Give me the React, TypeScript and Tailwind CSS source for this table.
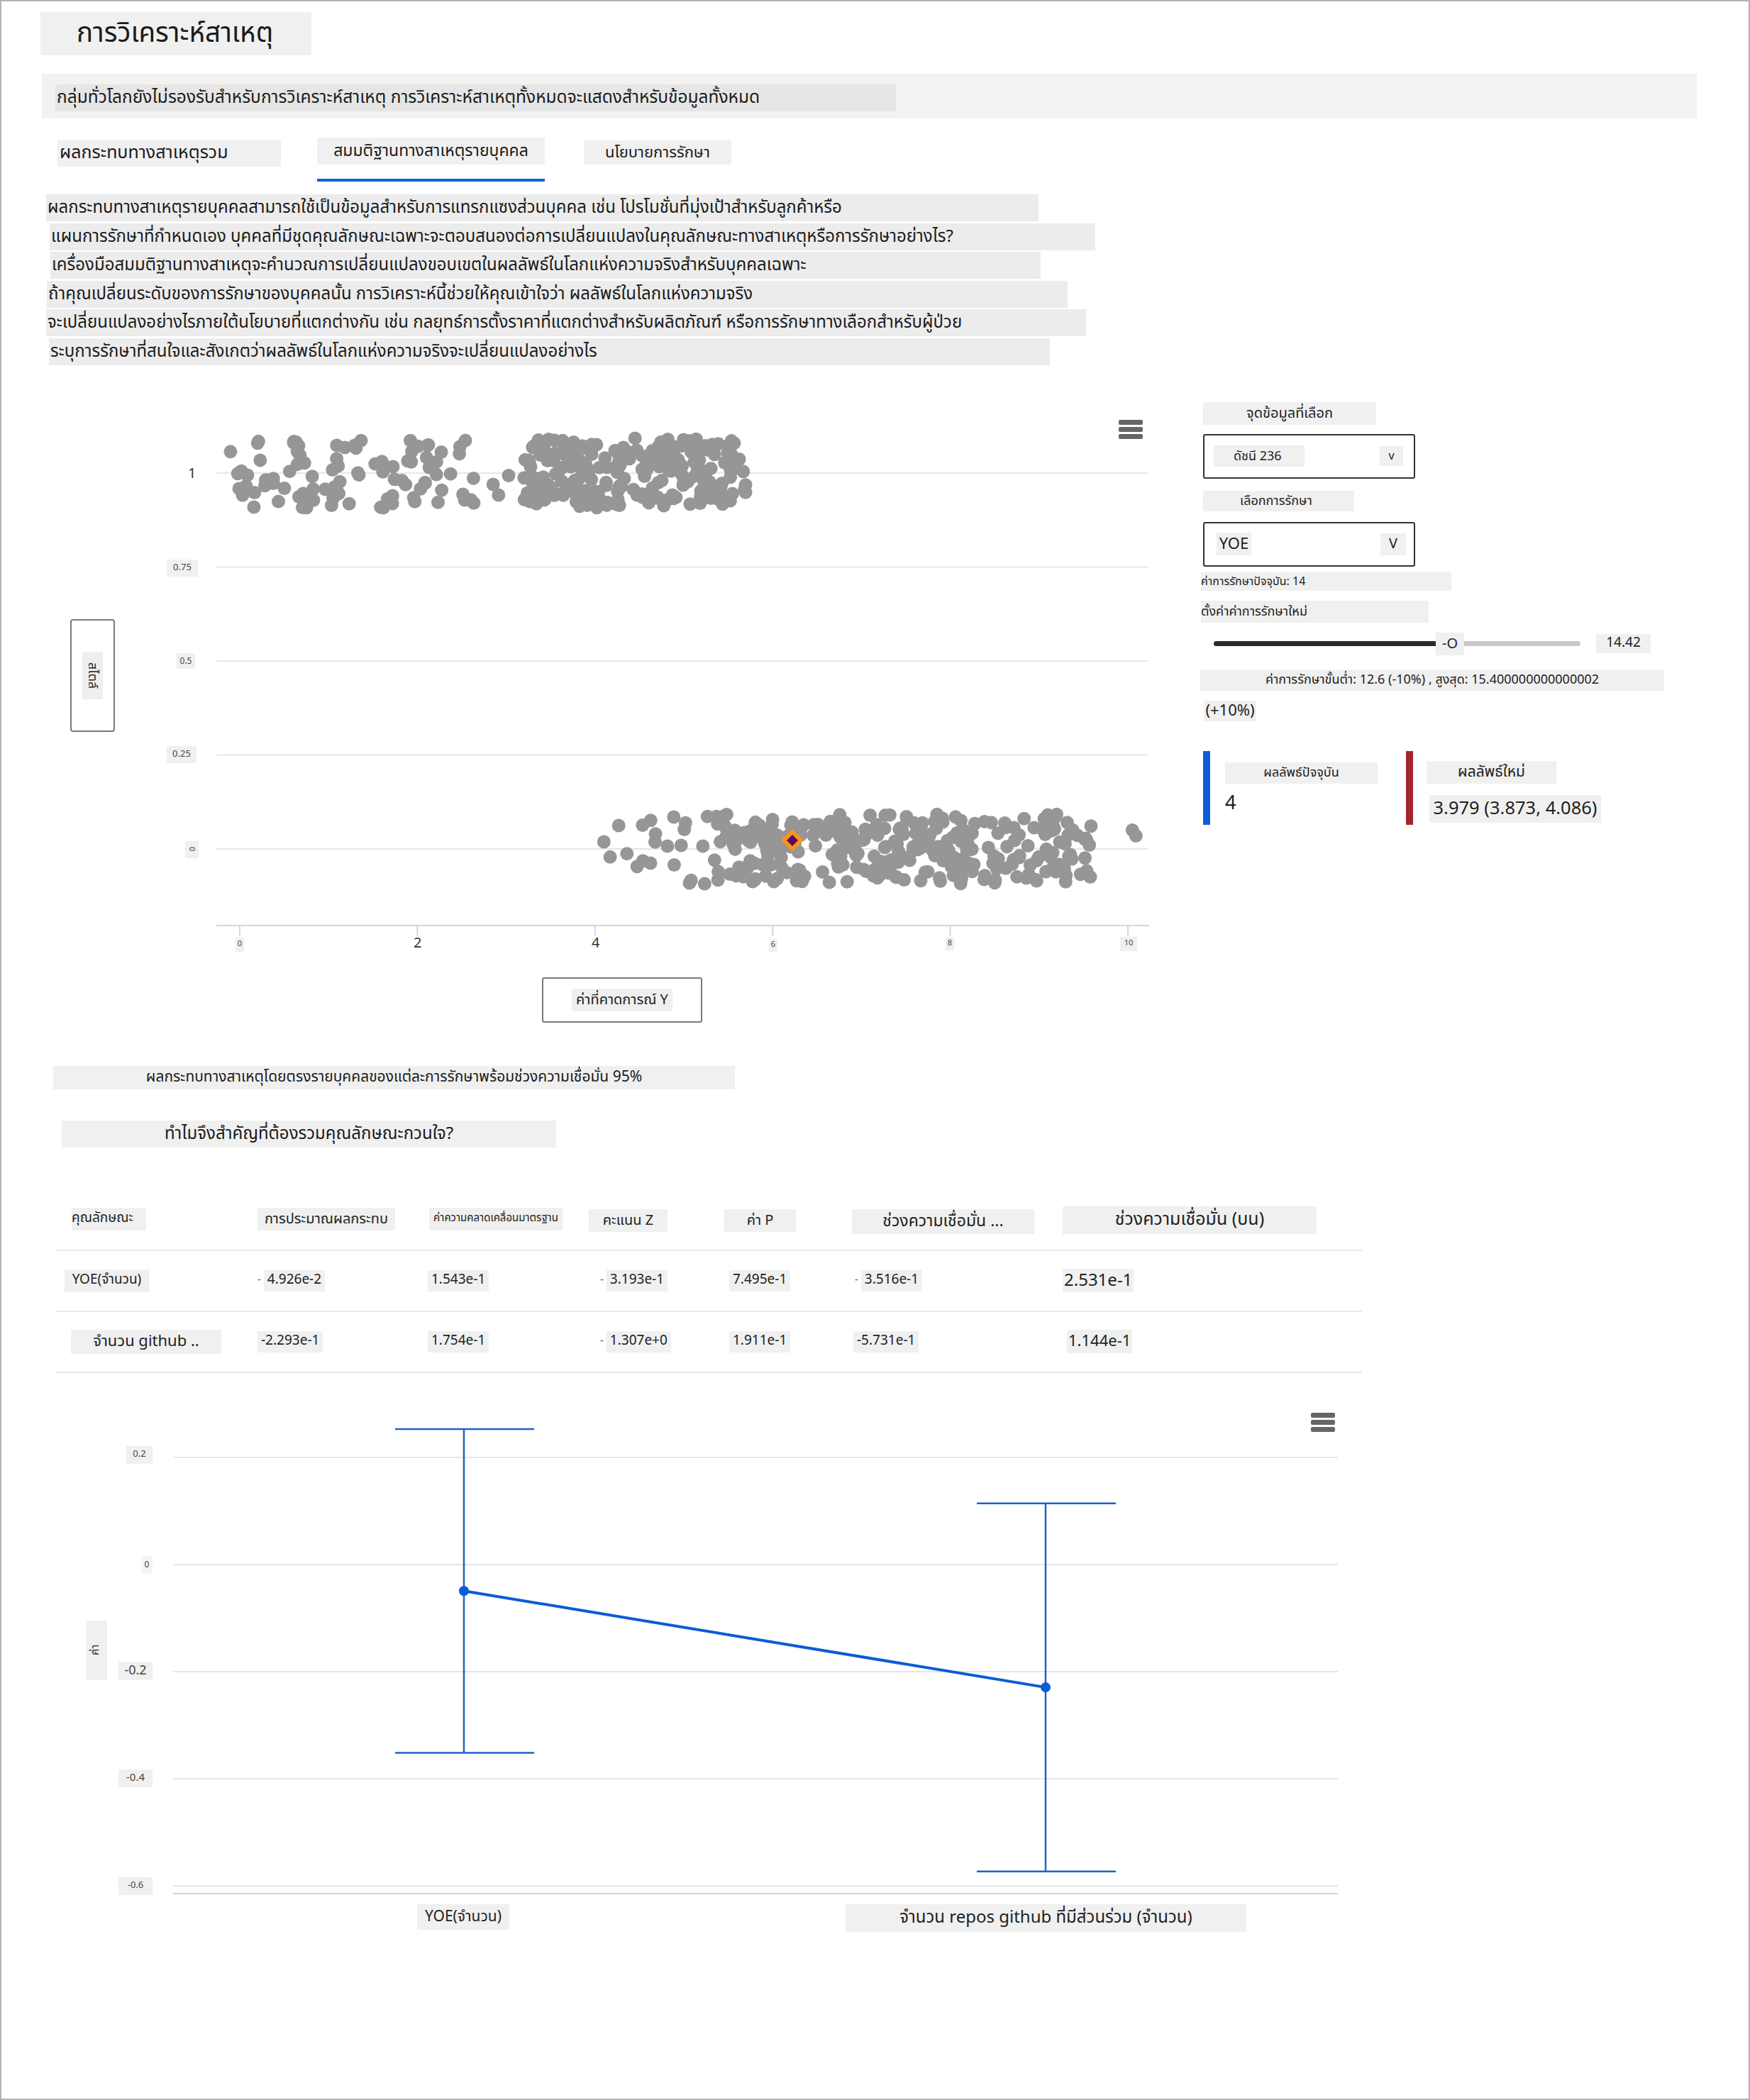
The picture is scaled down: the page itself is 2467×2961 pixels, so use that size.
import React from 'react'

function mulberry32(a: number) {
  return function () {
    a |= 0
    a = (a + 0x6d2b79f5) | 0
    let t = Math.imul(a ^ (a >>> 15), 1 | a)
    t = (t + Math.imul(t ^ (t >>> 7), 61 | t)) ^ t
    return ((t ^ (t >>> 14)) >>> 0) / 4294967296
  }
}

type Pt = [number, number]
const rnd = mulberry32(236)
const cluster = (n: number, x0: number, x1: number, yc: number): Pt[] =>
  Array.from({ length: n }, () => [x0 + rnd() * (x1 - x0), yc + (rnd() * 2 - 1) * 0.093] as Pt)

const points: Pt[] = [
  ...cluster(95, -0.15, 2.7, 1),
  ...cluster(3, 2.7, 3.15, 1),
  ...cluster(225, 3.2, 5.72, 1),
  ...cluster(22, 4.1, 5.3, 0),
  ...cluster(300, 5.3, 9.6, 0),
  [10.05, 0.05],
  [10.09, 0.035],
]
const sx = (v: number) => 278 + v * 125.2
const sy = (v: number) => 638 - v * 530

const paragraph = [
  { ml: 'ml-[63px]', w: 'w-[1399px]', text: 'ผลกระทบทางสาเหตุรายบุคคลสามารถใช้เป็นข้อมูลสำหรับการแทรกแซงส่วนบุคคล เช่น โปรโมชั่นที่มุ่งเป้าสำหรับลูกค้าหรือ' },
  { ml: 'ml-[68px]', w: 'w-[1474px]', text: 'แผนการรักษาที่กำหนดเอง บุคคลที่มีชุดคุณลักษณะเฉพาะจะตอบสนองต่อการเปลี่ยนแปลงในคุณลักษณะทางสาเหตุหรือการรักษาอย่างไร?' },
  { ml: 'ml-[69px]', w: 'w-[1396px]', text: 'เครื่องมือสมมติฐานทางสาเหตุจะคำนวณการเปลี่ยนแปลงขอบเขตในผลลัพธ์ในโลกแห่งความจริงสำหรับบุคคลเฉพาะ' },
  { ml: 'ml-[64px]', w: 'w-[1439px]', text: 'ถ้าคุณเปลี่ยนระดับของการรักษาของบุคคลนั้น การวิเคราะห์นี้ช่วยให้คุณเข้าใจว่า ผลลัพธ์ในโลกแห่งความจริง' },
  { ml: 'ml-[63px]', w: 'w-[1466px]', text: 'จะเปลี่ยนแปลงอย่างไรภายใต้นโยบายที่แตกต่างกัน เช่น กลยุทธ์การตั้งราคาที่แตกต่างสำหรับผลิตภัณฑ์ หรือการรักษาทางเลือกสำหรับผู้ป่วย' },
  { ml: 'ml-[67px]', w: 'w-[1411px]', text: 'ระบุการรักษาที่สนใจและสังเกตว่าผลลัพธ์ในโลกแห่งความจริงจะเปลี่ยนแปลงอย่างไร' },
]

function Hamburger({ className }: { className: string }) {
  return (
    <div className={`absolute flex flex-col gap-[3px] ${className}`}>
      <span className="h-[7px] w-full rounded-[2px] bg-[#666]" />
      <span className="h-[7px] w-full rounded-[2px] bg-[#666]" />
      <span className="h-[7px] w-full rounded-[2px] bg-[#666]" />
    </div>
  )
}

function ScatterChart() {
  return (
    <div className="relative h-[900px] w-[1600px] shrink-0">
      <svg className="absolute inset-0" width={1600} height={900}>
        {[1, 0.75, 0.5, 0.25, 0].map((v) => (
          <line key={v} x1={245} x2={1558} y1={sy(v)} y2={sy(v)} stroke="#e6e6e6" strokeWidth={2} />
        ))}
        <line x1={245} x2={1560} y1={746} y2={746} stroke="#ccd6eb" strokeWidth={2} />
        {[0, 2, 4, 6, 8, 10].map((v) => (
          <line key={v} x1={sx(v)} x2={sx(v)} y1={746} y2={760} stroke="#ccd6eb" strokeWidth={2} />
        ))}
        {points.map(([x, y], i) => (
          <circle key={i} cx={sx(x)} cy={sy(y)} r={9.5} fill="#969696" />
        ))}
        <polygon points="1057,610 1073,626 1057,642 1041,626" fill="#f7931e" />
        <polygon points="1057,618 1065,626 1057,634 1049,626" fill="#5a0b5c" />
      </svg>
      <Hamburger className="left-[1517px] top-[33px] w-[34px]" />

      {/* y ticks */}
      <span className="absolute left-[205px] top-[94px] text-[20px] text-[#333]">1</span>
      <span className="absolute left-[175px] top-[230px] flex h-[24px] w-[44px] items-center justify-center bg-[#f0f0f0] text-[13px] text-[#444]">0.75</span>
      <span className="absolute left-[189px] top-[362px] flex h-[22px] w-[26px] items-center justify-center bg-[#f0f0f0] text-[12px] text-[#444]">0.5</span>
      <span className="absolute left-[175px] top-[493px] flex h-[24px] w-[42px] items-center justify-center bg-[#f0f0f0] text-[13px] text-[#444]">0.25</span>
      <span className="absolute left-[201px] top-[627px] flex h-[24px] w-[19px] items-center justify-center bg-[#f0f0f0] text-[11px] text-[#444]">
        <span className="rotate-90">0</span>
      </span>

      {/* x ticks */}
      <span className="absolute left-[272px] top-[763px] flex h-[20px] w-[12px] items-center justify-center bg-[#f0f0f0] text-[11px] text-[#444]">0</span>
      <span className="absolute left-[523px] top-[756px] text-[20px] text-[#333]">2</span>
      <span className="absolute left-[774px] top-[756px] text-[20px] text-[#333]">4</span>
      <span className="absolute left-[1024px] top-[765px] flex h-[18px] w-[12px] items-center justify-center bg-[#f0f0f0] text-[11px] text-[#444]">6</span>
      <span className="absolute left-[1273px] top-[763px] flex h-[18px] w-[12px] items-center justify-center bg-[#f0f0f0] text-[11px] text-[#444]">8</span>
      <span className="absolute left-[1519px] top-[762px] flex h-[20px] w-[24px] items-center justify-center bg-[#f0f0f0] text-[11px] text-[#444]">10</span>

      {/* axis titles */}
      <div className="absolute left-[39px] top-[314px] flex h-[159px] w-[63px] items-center justify-center rounded-[4px] border-2 border-[#7a7a7a]">
        <div className="flex h-[67px] w-[29px] items-center justify-center bg-[#efefef]">
          <span className="rotate-90 text-[18px] text-[#222]">สไตล์</span>
        </div>
      </div>
      <div className="absolute left-[704px] top-[819px] flex h-[64px] w-[226px] items-center justify-center rounded-[3px] border-2 border-[#7a7a7a]">
        <div className="flex h-[32px] items-center bg-[#efefef] px-[6px] text-[20px] text-[#222]">ค่าที่คาดการณ์ Y</div>
      </div>
    </div>
  )
}

function WhatIfPanel() {
  return (
    <div className="ml-[32px] mt-[8px] flex w-[660px] flex-col text-[#222]">
      <div className="ml-[4px] flex h-[32px] w-[244px] items-center justify-center bg-[#f0f0f0] text-[20px]">จุดข้อมูลที่เลือก</div>

      <div className="ml-[4px] mt-[13px] flex h-[63px] w-[299px] items-center justify-between rounded-[3px] border-2 border-[#333] pl-[13px] pr-[15px]">
        <span className="flex h-[30px] w-[128px] items-center bg-[#f0f0f0] pl-[28px] text-[18px]">ดัชนี 236</span>
        <span className="flex h-[28px] w-[33px] items-center justify-center bg-[#f0f0f0] text-[16px]">v</span>
      </div>

      <div className="ml-[4px] mt-[17px] flex h-[29px] w-[213px] items-center bg-[#f0f0f0] pl-[52px] text-[18px]">เลือกการรักษา</div>

      <div className="ml-[4px] mt-[15px] flex h-[63px] w-[299px] items-center justify-between rounded-[3px] border-2 border-[#333] pl-[17px] pr-[11px]">
        <span className="flex h-[32px] w-[49px] items-center justify-center bg-[#f0f0f0] text-[22px]">YOE</span>
        <span className="flex h-[31px] w-[36px] items-center justify-center bg-[#f0f0f0] text-[20px]">V</span>
      </div>

      <div className="ml-[1px] mt-[8px] flex h-[26px] w-[353px] items-center bg-[#f0f0f0] text-[16px]">ค่าการรักษาปัจจุบัน: 14</div>
      <div className="ml-[1px] mt-[14px] flex h-[31px] w-[321px] items-center bg-[#f0f0f0] text-[18px]">ตั้งค่าค่าการรักษาใหม่</div>

      <div className="mt-[14px] flex h-[32px] items-center">
        <div className="ml-[19px] flex h-[7px] w-[517px] items-center rounded-full bg-[#c8c8c8]">
          <div className="h-[7px] w-[313px] rounded-l-full bg-[#2b2b2b]" />
          <div className="flex h-[32px] w-[40px] items-center justify-center bg-[#f0f0f0] text-[20px]">-O</div>
        </div>
        <div className="ml-[22px] flex h-[27px] w-[77px] items-center justify-center bg-[#f0f0f0] text-[19px]">14.42</div>
      </div>

      <div className="mt-[20px] flex h-[30px] w-[654px] items-center justify-center bg-[#f0f0f0] text-[18px]">
        ค่าการรักษาขั้นต่ำ: 12.6 (-10%) , สูงสุด: 15.400000000000002
      </div>
      <div className="ml-[5px] mt-[14px] flex h-[29px] w-[74px] items-center justify-center bg-[#f0f0f0] text-[22px]">(+10%)</div>

      <div className="ml-[4px] mt-[42px] flex">
        <div className="flex w-[286px]">
          <div className="h-[104px] w-[10px] bg-[#0c5fd8]" />
          <div className="ml-[21px] flex flex-col">
            <div className="mt-[16px] flex h-[30px] w-[215px] items-center justify-center bg-[#f0f0f0] text-[18px]">ผลลัพธ์ปัจจุบัน</div>
            <div className="mt-[14px] text-[27px] leading-none">4</div>
          </div>
        </div>
        <div className="flex">
          <div className="h-[104px] w-[10px] bg-[#a4262c]" />
          <div className="ml-[19px] flex flex-col">
            <div className="mt-[14px] flex h-[32px] w-[183px] items-center justify-center bg-[#f0f0f0] text-[21px]">ผลลัพธ์ใหม่</div>
            <div className="ml-[4px] mt-[16px] flex h-[39px] w-[242px] items-center justify-center bg-[#f0f0f0] text-[25.5px]">3.979 (3.873, 4.086)</div>
          </div>
        </div>
      </div>
    </div>
  )
}

const cols = 'grid grid-cols-[267px_237px_230px_189px_182px_297px_424px]'

function Val({ children, dash, className = '' }: { children: React.ReactNode; dash?: boolean; className?: string }) {
  return (
    <div className={`flex items-center ${className}`}>
      {dash && <span className="mr-[4px] text-[15px] text-[#555]">-</span>}
      <span className="flex h-[30px] items-center bg-[#f0f0f0] px-[5px] text-[19px] text-[#222]">{children}</span>
    </div>
  )
}

function EffectsTable() {
  return (
    <div className="ml-[76px] mt-[83px] w-[1842px] text-[#222]">
      <div className={`${cols} h-[61px] items-start pl-[18px]`}>
        <div className="ml-[5px] mt-[2px] flex h-[32px] w-[105px] items-center bg-[#f0f0f0] text-[19px]">คุณลักษณะ</div>
        <div className="mt-[2px] flex h-[32px] w-[194px] items-center justify-center bg-[#f0f0f0] text-[20px]">การประมาณผลกระทบ</div>
        <div className="ml-[5px] mt-[2px] flex h-[32px] w-[188px] items-center justify-center bg-[#f0f0f0] text-[15px]">ค่าความคลาดเคลื่อนมาตรฐาน</div>
        <div className="mt-[4px] flex h-[32px] w-[111px] items-center justify-center bg-[#f0f0f0] text-[20px]">คะแนน Z</div>
        <div className="ml-[2px] mt-[4px] flex h-[32px] w-[101px] items-center justify-center bg-[#f0f0f0] text-[20px]">ค่า P</div>
        <div className="mt-[4px] flex h-[35px] w-[257px] items-center justify-center bg-[#f0f0f0] text-[23px]">ช่วงความเชื่อมั่น ...</div>
        <div className="flex h-[39px] w-[358px] items-center justify-center bg-[#f0f0f0] text-[25px]">ช่วงความเชื่อมั่น (บน)</div>
      </div>
      <div className="h-[2px] bg-[#e8e8e8]" />
      <div className={`${cols} h-[84px] items-center pl-[18px]`}>
        <span className="-ml-[5px] flex h-[32px] w-[119px] items-center justify-center bg-[#f0f0f0] text-[19px]">YOE(จำนวน)</span>
        <Val dash>4.926e-2</Val>
        <Val className="ml-[3px]">1.543e-1</Val>
        <Val dash className="ml-[16px]">3.193e-1</Val>
        <Val className="ml-[9px]">7.495e-1</Val>
        <Val dash className="ml-[4px]">3.516e-1</Val>
        <div className="flex">
          <span className="flex h-[33px] items-center bg-[#f0f0f0] px-[2px] text-[24px]">2.531e-1</span>
        </div>
      </div>
      <div className="h-[2px] bg-[#e8e8e8]" />
      <div className={`${cols} h-[84px] items-center pl-[18px]`}>
        <div className="ml-[4px] flex h-[34px] w-[212px] items-center justify-center bg-[#f0f0f0] text-[22px]">จำนวน github ..</div>
        <Val>-2.293e-1</Val>
        <Val className="ml-[3px]">1.754e-1</Val>
        <Val dash className="ml-[16px]">1.307e+0</Val>
        <Val className="ml-[9px]">1.911e-1</Val>
        <Val className="ml-[2px]">-5.731e-1</Val>
        <div className="flex">
          <span className="ml-[6px] flex h-[33px] items-center bg-[#f0f0f0] px-[2px] text-[22px]">1.144e-1</span>
        </div>
      </div>
      <div className="h-[2px] bg-[#e8e8e8]" />
    </div>
  )
}

const ey = (v: number) => 249 - v * 755

function ErrorBarChart() {
  const bars = [
    { x: 594, v: -0.04926, lo: -0.3516, hi: 0.2531 },
    { x: 1414, v: -0.2293, lo: -0.5731, hi: 0.1144 },
  ]
  return (
    <div className="relative ml-[58px] mt-[21px] h-[800px] w-[1900px]">
      <svg className="absolute inset-0" width={1900} height={800}>
        {[0.2, 0, -0.2, -0.4, -0.6].map((v) => (
          <line key={v} x1={184} x2={1826} y1={ey(v)} y2={ey(v)} stroke="#e6e6e6" strokeWidth={2} />
        ))}
        <line x1={184} x2={1826} y1={713} y2={713} stroke="#ccd6eb" strokeWidth={2} />
        {bars.map((b) => (
          <g key={b.x} stroke="#1f63c6" strokeWidth={2.5}>
            <line x1={b.x} x2={b.x} y1={ey(b.hi)} y2={ey(b.lo)} />
            <line x1={b.x - 97} x2={b.x + 99} y1={ey(b.hi)} y2={ey(b.hi)} />
            <line x1={b.x - 97} x2={b.x + 99} y1={ey(b.lo)} y2={ey(b.lo)} />
          </g>
        ))}
        <line x1={594} y1={ey(-0.04926)} x2={1414} y2={ey(-0.2293)} stroke="#0b5cd6" strokeWidth={4} />
        {bars.map((b) => (
          <circle key={b.x} cx={b.x} cy={ey(b.v)} r={7} fill="#0b5cd6" />
        ))}
      </svg>
      <Hamburger className="left-[1788px] top-[35px] w-[34px]" />

      <span className="absolute left-[118px] top-[82px] flex h-[25px] w-[37px] items-center justify-center bg-[#f0f0f0] text-[13px] text-[#444]">0.2</span>
      <span className="absolute left-[139px] top-[237px] flex h-[25px] w-[16px] items-center justify-center bg-[#f5f5f5] text-[12px] text-[#444]">0</span>
      <span className="absolute left-[107px] top-[386px] flex h-[26px] w-[48px] items-center justify-center bg-[#f0f0f0] text-[18px] text-[#444]">-0.2</span>
      <span className="absolute left-[107px] top-[538px] flex h-[25px] w-[48px] items-center justify-center bg-[#f0f0f0] text-[15px] text-[#444]">-0.4</span>
      <span className="absolute left-[107px] top-[690px] flex h-[25px] w-[48px] items-center justify-center bg-[#f0f0f0] text-[13px] text-[#444]">-0.6</span>

      <div className="absolute left-[61px] top-[328px] flex h-[84px] w-[30px] items-center justify-center bg-[#f0f0f0]">
        <span className="-rotate-90 text-[15px] text-[#222]">ค่า</span>
      </div>

      <div className="absolute left-[528px] top-[728px] flex h-[36px] w-[130px] items-center justify-center bg-[#f0f0f0] text-[21px] text-[#222]">YOE(จำนวน)</div>
      <div className="absolute left-[1132px] top-[728px] flex h-[39px] w-[565px] items-center justify-center bg-[#f0f0f0] text-[24px] text-[#222]">
        จำนวน repos github ที่มีส่วนร่วม (จำนวน)
      </div>
    </div>
  )
}

export default function App() {
  return (
    <div className="h-[2961px] w-[2467px] overflow-hidden whitespace-nowrap border-2 border-[#b3b3b3] bg-white font-['Noto_Sans_Thai','Leelawadee_UI','Tahoma','Noto_Sans',sans-serif] text-[#1b1b1b]">
      <div className="ml-[55px] mt-[15px] flex h-[61px] w-[382px] items-center bg-[#f0f0f0] pl-[51px] text-[38.5px] leading-none">
        การวิเคราะห์สาเหตุ
      </div>

      <div className="ml-[57px] mt-[26px] h-[63px] w-[2333px] bg-[#f3f2f1] pl-[19px] pt-[15px]">
        <div className="flex h-[38px] w-[1185px] items-center bg-[#e6e6e6] pl-[2px] text-[24.5px]">
          กลุ่มทั่วโลกยังไม่รองรับสำหรับการวิเคราะห์สาเหตุ การวิเคราะห์สาเหตุทั้งหมดจะแสดงสำหรับข้อมูลทั้งหมด
        </div>
      </div>

      <div className="mt-[27px] flex h-[62px] items-start">
        <div className="ml-[79px] mt-[3px] flex h-[38px] w-[315px] items-center bg-[#f0f0f0] pl-[3px] text-[25px]">ผลกระทบทางสาเหตุรวม</div>
        <div className="ml-[51px] flex flex-col">
          <div className="flex h-[38px] w-[321px] items-center justify-center bg-[#f0f0f0] text-[23px]">สมมติฐานทางสาเหตุรายบุคคล</div>
          <div className="mt-[20px] h-[4px] w-[321px] bg-[#0f62d3]" />
        </div>
        <div className="ml-[55px] mt-[4px] flex h-[34px] w-[208px] items-center justify-center bg-[#f0f0f0] text-[22px]">นโยบายการรักษา</div>
      </div>

      <div className="mt-[18px] flex flex-col gap-[2.5px]">
        {paragraph.map((l, i) => (
          <div key={i} className={`${l.ml} ${l.w} flex h-[38px] items-center bg-[#ececec] pl-[2px] text-[24px]`}>
            {l.text}
          </div>
        ))}
      </div>

      <div className="mt-[44px] flex h-[900px] items-start">
        <div className="ml-[58px]">
          <ScatterChart />
        </div>
        <WhatIfPanel />
      </div>

      <div className="ml-[73px] mt-[44px] flex h-[33px] w-[961px] items-center justify-center bg-[#f0f0f0] text-[21px]">
        ผลกระทบทางสาเหตุโดยตรงรายบุคคลของแต่ละการรักษาพร้อมช่วงความเชื่อมั่น 95%
      </div>
      <div className="ml-[85px] mt-[44px] flex h-[38px] w-[697px] items-center justify-center bg-[#f0f0f0] text-[24px]">
        ทำไมจึงสำคัญที่ต้องรวมคุณลักษณะกวนใจ?
      </div>

      <EffectsTable />
      <ErrorBarChart />
    </div>
  )
}
